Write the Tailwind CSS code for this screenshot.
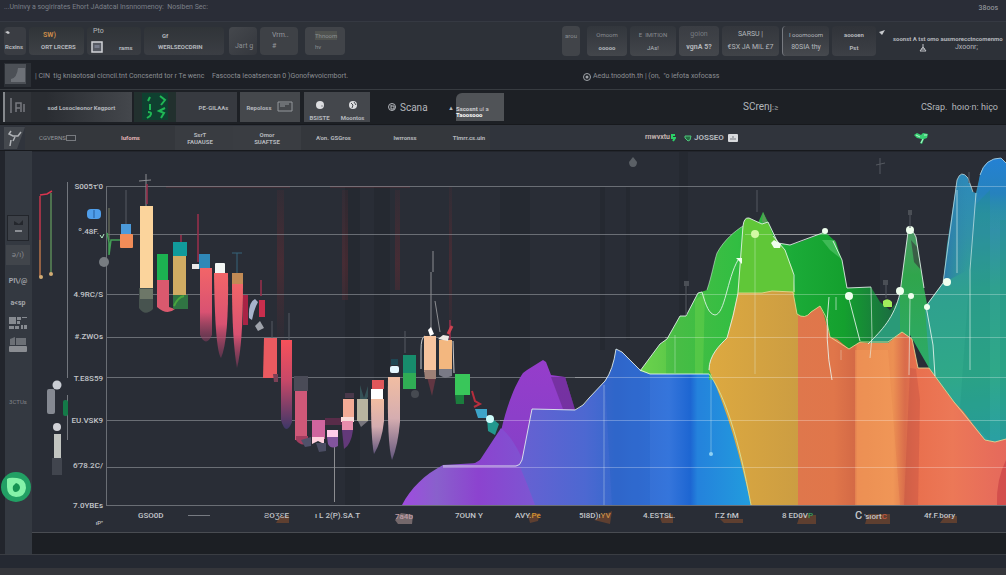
<!DOCTYPE html>
<html lang="en">
<head>
<meta charset="utf-8">
<title>Market chart</title>
<script src="https://cdn.jsdelivr.net/npm/@tailwindcss/browser@4"></script>
</head>
<body class="bg-[#252932] font-['Roboto',sans-serif] text-[#b4b7bc] overflow-x-hidden">
<div class="flex min-h-screen flex-col">

<header class="flex h-[21px] items-start justify-between bg-[#2a2d37] pl-1 pr-2 text-[7px] text-[#7c8089]">
  <p class="pt-px leading-3 whitespace-nowrap">...Uninvy a sogirirates Ehort JAdatcal Insnnomenoy: &nbsp;Nosiben Sec:</p>
  <p class="pt-0.5 leading-3 text-[#a0a3a9]">38oos</p>
</header>

<nav class="flex h-[39px] items-center justify-between border-t border-[#353942] bg-[#2d3138] pl-1 text-[7px] leading-[9px] whitespace-nowrap">
  <div class="flex h-7 items-stretch gap-[3px]">
    <button class="flex w-[22px] flex-col justify-between rounded-sm bg-[#3a3d43] px-px py-1 text-left text-[6px] font-bold"><svg class="h-1.5 w-1.5" viewBox="0 0 6 6"><path d="M0 1L3 0L5 2L3 3" fill="#c8cacd"/></svg><span>Rcxins</span></button>
    <button class="flex w-[55px] flex-col items-start justify-between rounded-sm bg-linear-to-b from-[#303438] to-[#3e4146] py-1 pl-3 text-[6px] font-bold"><span class="pl-0.5 text-[7px] text-[#c98a4a]">SW)</span><span>ORT LRCERS</span></button>
    <button class="flex w-[54px] flex-col items-start justify-between rounded-sm bg-linear-to-b from-[#303438] to-[#393c42] pb-0.5 pl-1"><span class="pl-0.5">Pto</span><span class="flex items-center gap-4 text-[6px] font-bold"><svg class="h-3 w-3" viewBox="0 0 12 12"><rect x="1" y="1" width="10" height="10" fill="#565a63" stroke="#d2d4d8" stroke-width="1.5"/><rect x="3.500" y="4" width="5" height="3" fill="#777c8b"/></svg>rams</span></button>
    <button class="flex w-[80px] flex-col items-start justify-between rounded-sm bg-linear-to-b from-[#303438] to-[#3b3e44] py-1 pl-3.5 text-[6px] font-bold"><span class="pl-1">Gf</span><span>WERLSEOCDRIN</span></button>
    <button class="ml-0.5 flex w-[28px] items-end rounded-sm bg-linear-to-br from-[#45484d] to-[#34373d] pb-1 pl-1.5 text-[#8c8f94]">Jart g</button>
    <button class="flex w-[38px] flex-col items-start justify-between rounded-sm bg-[#3e4146] py-1 pl-3 text-[#96999e]"><span>Vrm..</span><span>#</span></button>
    <button class="ml-1 flex w-[40px] flex-col items-start justify-between rounded-sm bg-[#414449] py-1 pl-2.5 text-[6px] text-[#8b8f91]"><span class="bg-[#505350]">Thnoom</span><span>hv</span></button>
  </div>
  <div class="flex h-[30px] items-stretch gap-[3px]">
    <button class="w-[18px] rounded-sm bg-[#414449] pb-3 text-[6px] text-[#8b8e93]">arou</button>
    <button class="ml-1 flex w-[40px] flex-col items-center justify-between rounded-sm bg-linear-to-b from-[#32363c] to-[#43464b] py-1 text-[6px]"><span class="text-[#888b91]">Omoom</span><span class="font-bold">ooooo</span></button>
    <button class="flex w-[46px] flex-col items-center justify-between rounded-sm bg-linear-to-b from-[#32363c] to-[#43464b] py-1 text-[6px]"><span class="text-[#888b91]">E &nbsp;IMITION</span><span>JAs!</span></button>
    <button class="flex w-[40px] flex-col items-center justify-between rounded-sm bg-linear-to-b from-[#3a3d43] to-[#44474c] py-1"><span class="text-[#777a80]">goion</span><span class="font-bold">vgnA 5?</span></button>
    <button class="flex w-[57px] flex-col items-center justify-between rounded-sm bg-linear-to-b from-[#34373d] to-[#404348] py-1"><span>SARSU |</span><span>€SX JA MIL £7</span></button>
    <button class="flex w-[47px] flex-col items-center justify-between rounded-sm border-l border-[#777a80] bg-linear-to-b from-[#33363c] to-[#46494e] py-1"><span class="text-[6px]">I ooomooom</span><span>80SIA thy</span></button>
    <button class="flex w-[44px] flex-col items-center justify-between rounded-sm bg-linear-to-b from-[#303339] to-[#3d4046] py-1 text-[6px] font-bold"><span>aoooen</span><span>Pst</span></button>
    <div class="flex w-[127px] flex-col justify-between py-1"><p class="flex gap-2 text-[6px] font-bold"><svg class="h-1.5 w-1.5 shrink-0" viewBox="0 0 6 6"><path d="M0 2L6 0L3 5Z" fill="#c8cacd"/></svg><span class="pt-1">soonst A tst omo ausmorecctncomenmo</span></p><p class="flex items-center gap-7 pl-10"><svg class="h-2 w-2" viewBox="0 0 8 8"><path d="M4 0V3L1 7H7L4 3M2 5H6" fill="none" stroke="#c2c4c8"/></svg>Jxoonr;</p></div>
  </div>
</nav>

<section class="flex h-[30px] items-center border-b border-[#373b40] bg-[#1d2026] pl-1 text-[7px] text-[#8b8e93] whitespace-nowrap">
  <svg class="h-6 w-[27px]" viewBox="0 0 27 24"><rect width="27" height="24" fill="#2b2f35"/><rect x="1" y="1" width="21" height="20" fill="#4c5056"/><path d="M14 5H21V19H7V16Q13 15 14 5Z" fill="#6d7177"/></svg>
  <p class="w-[181px] pl-1 pt-1">| CIN &nbsp;tig kniaotosal cicncil.tnt Concsentd tor r Te wenc</p>
  <p class="w-[371px] pt-1">Fascocta Ieoatsencan 0 )Gonofwvoicmbort.</p>
  <p class="flex items-center gap-0.5 pt-1"><svg class="h-2 w-2" viewBox="0 0 8 8"><circle cx="4" cy="4" r="3.500" fill="none" stroke="#a0a3a8"/><circle cx="4" cy="4" r="1.500" fill="#a0a3a8"/></svg>Aedu.tnodoth.th | (on, &nbsp;"o iefota xofocass</p>
</section>

<section class="flex h-[34px] items-center bg-[#1d2025] pl-[3px] text-[6px] leading-[9px] whitespace-nowrap">
  <div class="flex h-[30px] w-[28px] items-center justify-center border-l-2 border-[#85888c] bg-[#303338]"><svg class="h-5 w-5" viewBox="0 0 20 20"><path d="M3 1V16M8 15V6H13V15M8 11H12M16 7V15" fill="none" stroke="#777a7f" stroke-width="1.500"/></svg></div>
  <button class="h-[30px] w-[101px] bg-linear-to-r from-[#2a2d32] from-15% to-[#44474c] font-bold">sod Losocieonor Kegport</button>
  <button aria-label="Signals" class="ml-0.5 flex h-[30px] w-[42px] items-center justify-center bg-[#22302e]"><svg class="h-7 w-8" viewBox="0 0 32 28"><rect x="3" width="26" height="27" fill="#0f4030"/><path d="M11 4L9 8M11 11V17M9 19Q14 19 11 23L8 25M21 3L26 7L22 12M26 15L20 18L25 20L22 25" fill="none" stroke="#20b855" stroke-width="2"/></svg></button>
  <button class="h-[30px] w-[61px] bg-[#373a40] pl-3.5 font-bold">PE-GILAAs</button>
  <button class="ml-[3px] flex h-[30px] w-[60px] items-center justify-center gap-1.5 bg-[#45484c] font-bold">Repoloss<svg class="h-3 w-4" viewBox="0 0 16 12"><path d="M1 1H15V10H1ZM3 3H12M3 5H8" fill="none" stroke="#94979b"/></svg></button>
  <div class="ml-1 flex h-[30px] w-[66px] items-end justify-around bg-[#44474c] font-bold">
    <button class="flex flex-col items-center gap-1"><svg class="h-2 w-2" viewBox="0 0 8 8"><circle cx="4" cy="4" r="4" fill="#dcdde0"/><path d="M5 5H7" stroke="#8a8d91"/></svg>BSISTE</button>
    <button class="flex flex-col items-center gap-1"><svg class="h-2 w-2" viewBox="0 0 8 8"><circle cx="4" cy="4" r="4" fill="#dcdde0"/><path d="M2 2L4 4L3 7M5 1L7 4" stroke="#4a4d52" fill="none"/></svg>Moontos</button>
  </div>
  <button class="ml-[18px] flex w-[60px] items-center gap-1 text-[10px]"><svg class="h-2 w-2" viewBox="0 0 8 8"><circle cx="4" cy="4" r="3.500" fill="none" stroke="#b4b7bc"/><path d="M3 2V6H6V3H3" fill="none" stroke="#b4b7bc"/></svg>Scana</button>
  <span>&#9650;</span>
  <button class="ml-0.5 h-7 w-[48px] rounded-tl-md bg-[#505357] pt-2 text-left font-bold"><span class="block leading-[7px] text-[#d0d2d5]">Sscosnt <span class="font-normal">ul a</span></span><span class="block leading-[6px] text-white">Taoosooo</span></button>
  <a href="#" class="ml-[239px] text-[10px]">SCrenȷ<span class="text-[8px]">:≥</span></a>
  <a href="#" class="ml-auto pr-2 text-[9px]">CSrap. &nbsp;hoıo·n: hiço</a>
</section>

<section class="flex h-[27px] items-center border-y border-[#17191d] bg-[#30343c] pl-1 text-[6px] leading-[7px] font-bold whitespace-nowrap">
  <svg class="h-[22px] w-[21px]" viewBox="0 0 21 22"><path d="M0 0H21L13 22H0Z" fill="#44484e"/><path d="M7 4L5 7L9 9H14L17 5M7 13L6 19M11 10L9 14" fill="none" stroke="#b0b3b7" stroke-width="1.500"/></svg>
  <div class="flex h-6 items-center bg-[#34373c]">
  <button class="flex w-[80px] items-center pl-3.5 font-normal text-[#95989c]">CGVERNS<span class="h-1.5 w-2.5 border border-[#777a7f]"></span></button>
  <button class="w-[70px] pl-4 text-left text-[#e0b3b5]">Iufoms</button>
  <button class="h-full w-[58px] bg-[#393c41] pr-2">SsrT<br>FAUAUSE</button>
  <button class="h-full w-[68px] bg-[#3a3d42]">Omor<br>SUAFTSE</button>
  <button class="w-[61px] pl-1">A'on. GSGros</button>
  <button class="w-[86px]">lwrronss</button>
  <button class="w-[42px]">Tlmrr.cs.uin</button>
  </div>
  <p class="ml-[155px] flex items-center text-[7px] text-[#c4b3b0]">rnwvxtu<svg class="h-2 w-1.5" viewBox="0 0 6 8"><path d="M5 1H2V4H5L3 7" fill="none" stroke="#2bd067" stroke-width="2"/></svg></p>
  <p class="ml-2 flex items-center gap-0.5 text-[8px]"><svg class="h-2 w-2" viewBox="0 0 8 8"><path d="M1 2H7L6 6L4 7L1 4Z" fill="#256d43" stroke="#4fc47b"/></svg>JOSSEO</p>
  <svg class="ml-1 h-2 w-2.5" viewBox="0 0 10 8"><rect width="10" height="8" rx="1" fill="#d8dadd"/><path d="M2 5H8M4 3H6" stroke="#777a80"/></svg>
  <svg class="mr-[77px] ml-auto h-3.5 w-4" viewBox="0 0 16 14"><path d="M1 4L4 2L8 4L10 2L15 3L14 7L11 8L9 13L7 12L9 8L4 7Z" fill="#37cf72"/><path d="M3 4L7 6M11 4L14 4M10 8L8 12" stroke="#b8f4d0" stroke-width="1"/></svg>
</section>

<main class="flex flex-1 bg-[#252932]">
  <aside class="flex w-8 shrink-0 flex-col items-center border-b border-[#3a3d43] bg-linear-to-r from-[#22252c] from-15% to-[#343941] to-16% pl-1 text-[7px] text-[#a4a7ac]">
    <button aria-label="Panel" class="mt-16 flex h-[26px] w-[22px] items-center justify-center border border-[#22252b] bg-[#3c4047]"><svg class="h-4 w-4" viewBox="0 0 16 16"><path d="M4 1L9 4L13 0V5H4Z" fill="#24272d"/><path d="M5 11H12" stroke="#a6a9ae" stroke-width="1.500"/></svg></button>
    <button class="mt-1 h-5 w-6 bg-[#41454b] text-[8px] text-[#85888d]">ə/ı)</button>
    <button class="mt-2 h-4 font-bold">PI\/@</button>
    <button class="mt-1.5 h-4 font-bold">a&lt;sp</button>
    <button aria-label="Grid" class="mt-1.5"><svg class="h-3 w-[18px]" viewBox="0 0 18 12"><path d="M0 0H7V7H0ZM8 0H12V3H8ZM13 0H18V1H13ZM8 4H11V7H8ZM0 9H5V12H0ZM6 9H10V12H6ZM12 8H14V12H12ZM15 8H18V12H15Z" fill="#878b91"/></svg></button>
    <button aria-label="Files" class="mt-2"><svg class="h-4 w-[18px]" viewBox="0 0 18 16"><path d="M1 2L6 0V8H1ZM7 1H17V8H7Z" fill="#6c7076"/><rect y="9" width="18" height="6" rx="1" fill="#8a8d92"/></svg></button>
    <button class="mt-11 text-[6px] text-[#81848a]">3CTUs</button>
    <button aria-label="Start" class="mt-auto mb-[52px] -ml-1"><svg class="h-[30px] w-[30px]" viewBox="0 0 30 30"><circle cx="15" cy="15" r="15" fill="#22a064"/><path d="M6 7Q8 5 16 6Q25 7 25 16Q24 25 15 25Q6 24 6 15Z" fill="#84f2a8"/><path d="M15 11Q19 12 19 16Q18 20 14 20Q11 19 12 14Z" fill="#159352"/></svg></button>
  </aside>
  <div class="flex min-w-0 flex-1 flex-col border-t border-[#22252c] border-b border-b-[#3a3d43] bg-[#1c1f24]">
  <svg class="block h-auto w-full border-b border-[#494c52]" viewBox="32 152 974 380" font-family="Roboto,sans-serif" font-size="8" fill="#c3c6ca" role="img" aria-label="Candlestick and area chart">
    <defs>
      <linearGradient id="purple" x1="0" x2="0" y1="0" y2="1"><stop offset="0" stop-color="#963dcb"/><stop offset=".6" stop-color="#8740c8"/><stop offset="1" stop-color="#904bd6"/></linearGradient>
      <linearGradient id="violet" gradientUnits="userSpaceOnUse" x1="402" x2="540" y1="0" y2="0"><stop offset="0" stop-color="#a04be0"/><stop offset=".25" stop-color="#8960cc"/><stop offset=".55" stop-color="#8c43cf"/><stop offset="1" stop-color="#7b58d2"/></linearGradient>
      <linearGradient id="blue" gradientUnits="userSpaceOnUse" x1="515" x2="752" y1="0" y2="0"><stop offset="0" stop-color="#6960d2"/><stop offset=".3" stop-color="#4c68d1"/><stop offset=".42" stop-color="#3769cd"/><stop offset=".65" stop-color="#3575db"/><stop offset=".74" stop-color="#1d66d2"/><stop offset=".77" stop-color="#2482dc"/><stop offset="1" stop-color="#229ddd"/></linearGradient>
      <linearGradient id="green" gradientUnits="userSpaceOnUse" x1="640" x2="895" y1="0" y2="0"><stop offset="0" stop-color="#62cf4c"/><stop offset=".14" stop-color="#48bd45"/><stop offset=".38" stop-color="#32be42"/><stop offset=".6" stop-color="#1bab38"/><stop offset=".8" stop-color="#14a02e"/><stop offset="1" stop-color="#1b6b42"/></linearGradient>
      <linearGradient id="teal" gradientUnits="userSpaceOnUse" x1="940" x2="975" y1="170" y2="441"><stop offset="0" stop-color="#2c88bd"/><stop offset=".25" stop-color="#3191a8"/><stop offset=".45" stop-color="#2fa08f"/><stop offset=".75" stop-color="#2fa888"/><stop offset="1" stop-color="#2aa0a2"/></linearGradient>
      <linearGradient id="crest" x1="0" x2="0" y1="0" y2="1"><stop offset="0" stop-color="#2481d4"/><stop offset=".5" stop-color="#2682bd"/><stop offset="1" stop-color="#2a9c8f" stop-opacity="0"/></linearGradient>
      <linearGradient id="edge" x1="0" x2="1" y1="0" y2="0"><stop offset="0" stop-color="#2c6fb0" stop-opacity=".8"/><stop offset="1" stop-color="#2c86a8" stop-opacity="0"/></linearGradient>
      <linearGradient id="spike" x1="0" x2="0" y1="0" y2="1"><stop offset="0" stop-color="#4c9a66"/><stop offset=".3" stop-color="#30a54c"/><stop offset="1" stop-color="#2cab6d"/></linearGradient>
      <linearGradient id="orange" gradientUnits="userSpaceOnUse" x1="709" x2="1006" y1="0" y2="0"><stop offset="0" stop-color="#dda940"/><stop offset=".3" stop-color="#cc9d42"/><stop offset=".3" stop-color="#df774c"/><stop offset=".42" stop-color="#e0764a"/><stop offset=".49" stop-color="#d46a46"/><stop offset=".5" stop-color="#e8864f"/><stop offset=".62" stop-color="#ec9053"/><stop offset=".66" stop-color="#d96c4b"/><stop offset=".7" stop-color="#e9704e"/><stop offset=".82" stop-color="#ec7857"/><stop offset="1" stop-color="#e5695c"/></linearGradient>
      <linearGradient id="heat" x1="0" x2="0" y1="0" y2="1"><stop offset="0" stop-color="#ee704f" stop-opacity="0"/><stop offset="1" stop-color="#ea5058" stop-opacity=".5"/></linearGradient>
      <linearGradient id="tail" x1="0" x2="0" y1="0" y2="1"><stop offset="0" stop-color="#f26568"/><stop offset=".6" stop-color="#d95272"/><stop offset="1" stop-color="#8d3d62" stop-opacity=".5"/></linearGradient>
      <linearGradient id="fade" x1="0" x2="0" y1="0" y2="1"><stop offset="0" stop-color="#f7515a"/><stop offset=".45" stop-color="#c84868"/><stop offset="1" stop-color="#3e3768"/></linearGradient>
      <linearGradient id="peach" x1="0" x2="0" y1="0" y2="1"><stop offset="0" stop-color="#f1bda2"/><stop offset=".5" stop-color="#d5adb0"/><stop offset="1" stop-color="#62567d"/></linearGradient>
      <linearGradient id="rust" x1="0" x2="0" y1="0" y2="1"><stop offset="0" stop-color="#7b2b32" stop-opacity=".1"/><stop offset=".5" stop-color="#7b2b32" stop-opacity=".35"/><stop offset="1" stop-color="#7b2b32" stop-opacity=".05"/></linearGradient>
    </defs>
    <rect x="32" y="152" width="974" height="382" fill="#292d36"/>
    <g fill="#23262e" opacity=".6"><path d="M345 187H360V505H345ZM374 187H390V400H374ZM500 187H530V400H500ZM600 187H605V350H600ZM626 187H630V340H626ZM679 152H688V320H679ZM850 187H880V300H850Z"/></g>
    <g fill="url(#rust)"><path d="M277 190H284V340H277ZM342 190H348V300H342ZM449 187H452V330H449ZM395 190H400V290H395Z"/></g>
    <path d="M166 187H290M330 187H410" stroke="#702e36" opacity=".6"/>
    <path d="M107 186.500H1006M107 234.500H1006M107 294.500H1006M107 337.500H1006M107 377.500H1006M107 420.500H1006M107 467.500H1006M107 505.500H1006M106.500 186V506" stroke="#a0a4aa" stroke-opacity=".55"/>

    <!-- Left gauges -->
    <path d="M67.500 182V378M67.500 395V440" stroke="#73777e"/>
    <path d="M40 195L47 194L52 191" fill="none" stroke="#db354f" stroke-width="1.500"/><path d="M40 196V240" stroke="#c3374d" stroke-width="1.500"/><path d="M40 240V277" stroke="#b9734a" stroke-width="1.500"/><path d="M51 193V274" stroke="#5b8a58" stroke-width="1.500"/>
    <circle cx="41" cy="277" r="2" fill="#d3ac74"/><circle cx="51" cy="274" r="2" fill="#d3ac74"/>
    <rect x="87" y="209" width="14" height="10" rx="4" fill="#4f9eea"/><path d="M94 210V218" stroke="#245c9d"/>
    <circle cx="104" cy="262" r="5" fill="#777c81"/>
    <path d="M109 208V240" stroke="#7b8065"/><path d="M107 233L109 242V255L111 240H121" fill="none" stroke="#439f55" stroke-width="1.500"/><path d="M100 235L102 238L104 234" fill="none" stroke="#b8f0c6"/>
    <circle cx="57" cy="385" r="4.500" fill="#c9ccd3"/><rect x="47" y="389" width="8" height="25" rx="2" fill="#858992"/><rect x="63" y="400" width="5" height="16" rx="2" fill="#147a48"/>
    <circle cx="57" cy="427" r="4" fill="#d0d2d7"/><rect x="54" y="434" width="7" height="24" fill="#c2c5c1"/><rect x="52" y="458" width="10" height="17" fill="#41454e"/>

    <!-- Wicks -->
    <g fill="none" stroke="#8c8d91"><path d="M146 174V206M139 181L151 180M334.500 440V502M431 272V330M433 251V272M435 301L440 332"/><path d="M126 190V224M289 313V340M405 331V353M272 321V340" stroke="#565a62"/><path d="M198 214V262M181 235V242M261 280V296M450 320V340M147 184V204" stroke="#9c2f4c" stroke-width="1.500"/><path d="M232 253H242M237 253V274" stroke="#37647b"/><path d="M421 369V350Q421 337 425 336M453 341L454 373" stroke="#c9c9cb"/></g>

    <!-- Candles -->
    <rect x="121" y="224" width="10" height="10" fill="#4c9ada"/><rect x="120" y="234" width="13" height="14" rx="1" fill="#f18c58"/>
    <rect x="140" y="206" width="13" height="83" fill="#fbd49c"/><path d="M139 288H153V309Q145 317 139 308Z" fill="#47534f"/><rect x="140" y="289" width="13" height="10" fill="#6d7768"/>
    <rect x="157" y="254" width="11" height="26" fill="#1cb251"/><path d="M157 280H169V307L175 309Q167 316 157 307Z" fill="#da596e"/>
    <rect x="173" y="242" width="14" height="14" fill="#119b9b"/><rect x="173" y="256" width="13" height="39" fill="#d1ac63"/><path d="M173 295H188V309H173Z" fill="#307443"/><path d="M174 306Q178 297 184 296" stroke="#49a53d" fill="none" stroke-width="2"/>
    <rect x="199" y="254" width="11" height="15" fill="#2f88b8"/><rect x="192" y="264" width="7" height="5" fill="#eceaea"/><path d="M200 268H212V335Q206 348 200 335Z" fill="url(#tail)"/>
    <rect x="215" y="263" width="10" height="11" rx="1" fill="#f3f6f4"/><path d="M214 273H228Q229 340 221 358Q215 350 214 273Z" fill="url(#tail)"/>
    <rect x="232" y="273" width="11" height="12" fill="#c28b55"/><path d="M232 284H243Q243 345 237 368Q232 340 232 284Z" fill="url(#tail)"/>
    <rect x="243" y="295" width="5" height="30" fill="#a92345"/><path d="M249 318Q248 302 255 299L258 302Q254 309 252 320Z" fill="#a8b3cb"/><rect x="259" y="300" width="6" height="17" fill="#c92e4d"/><path d="M255 326L260 321L264 328L258 331Z" fill="#9fa3ab"/>
    <path d="M264 338H277V378H263Z" fill="#ea5a60"/><path d="M273 374H278V382H274Z" fill="#7c4056"/>
    <path d="M281 340H292V422Q286 437 281 420Z" fill="url(#fade)"/>
    <rect x="294" y="376" width="14" height="15" fill="#4a4b57"/><rect x="295" y="391" width="12" height="49" fill="#cf5878"/><path d="M296 436H308V443Q301 447 296 440Z" fill="#a23d5f"/><path d="M301 440L311 437V446L305 447Z" fill="#50516a"/>
    <rect x="312" y="420" width="13" height="19" fill="#cf659e"/><path d="M312 437H324V444L318 441L312 444Z" fill="#ffd2df"/><path d="M316 443H326V451L319 452Z" fill="#4b4d63"/>
    <rect x="325" y="418" width="17" height="7" fill="#592c49"/><rect x="327" y="430" width="11" height="7" fill="#ffcce9"/><path d="M327 437H338V446Q331 450 328 444Z" fill="#82549d"/>
    <rect x="345" y="393" width="9" height="5" fill="#49384a"/><rect x="343" y="399" width="11" height="18" fill="#f3ab96"/><rect x="341" y="417" width="13" height="5" fill="#fadbd9"/><rect x="342" y="421" width="11" height="9" fill="#e88dac"/><path d="M342 430H353Q351 445 344 449Z" fill="#63397a"/>
    <path d="M360 385L364 398L368 386V397L366 400H360Z" fill="#365257"/><rect x="357" y="399" width="11" height="22" fill="#b8b49f"/><path d="M358 421H368L361 427Z" fill="#77757d"/>
    <rect x="372" y="380" width="12" height="9" fill="#df575a"/><rect x="371" y="389" width="12" height="10" fill="#fff"/><path d="M371 399H384V421Q382 441 374 454Q371 440 371 399Z" fill="url(#peach)"/>
    <rect x="391" y="359" width="7" height="6" fill="#1f4653"/><rect x="390" y="366" width="9" height="7" rx="2" fill="#e5f7ff"/><path d="M388 377H400V422Q398 445 392 460Q387 445 388 377Z" fill="url(#peach)"/>
    <rect x="403" y="355" width="13" height="18" fill="#178c6c"/><rect x="403" y="373" width="13" height="16" fill="#30ad55"/><circle cx="415" cy="394" r="4" fill="#464a51"/>
    <path d="M427 377H436L432 396Z" fill="#613642"/><rect x="424" y="336" width="12" height="36" fill="#f7c49e"/><path d="M424 370H436V379H425Z" fill="#9d8076"/><path d="M428 330L431 327L434 334L430 336Z" fill="#fff"/>
    <rect x="439" y="340" width="13" height="29" fill="#f3b77f"/><path d="M439 369H452V376L445 378L439 375Z" fill="#797a86"/><path d="M438 339L443 335L449 336L448 341L443 340Z" fill="#eee9e4"/><path d="M448 334L452 326" stroke="#cc4350" stroke-width="3"/>
    <path d="M455 374H470V395H455Z" fill="#39c65a"/><path d="M455 395H464V404H456Z" fill="#1b7d3d"/><path d="M472 391L475 401L480 404L474 407" fill="none" stroke="#b72e3d" stroke-width="2"/><path d="M475 409H487V418H478Z" fill="#3da4c8"/><path d="M487 418L494 420L499 424L495 435L488 431Z" fill="#22988e"/><circle cx="490" cy="419" r="4" fill="#cdfcfb"/>

    <!-- Area layers -->
    <path d="M470 466L485 457L501 431C507 405 515 385 523 373L527 370L543 360L546 362L551 375L565 377L575 410L530 466L528 505H460Z" fill="url(#purple)"/>
    <path d="M551 377H565L575 409H563Z" fill="#642a87" opacity=".6"/>
    <path d="M402 505C411 488 424 475 443 465L478 463L501 428C513 438 521 455 527 470L540 505Z" fill="url(#violet)"/>
    <path d="M516 466Q520 466 522 460L532 409L575 410Q584 406 589 398L605 381Q613 370 616 349L622 352L640 370L650 374H709C725 395 739 440 751 505H535Q527 483 520 467Z" fill="url(#blue)"/>
    <path d="M605 382Q614 370 616 350L640 370L650 374V505H612Z" fill="#1959bf" opacity=".22"/>
    <path d="M640 371L660 344L667 339L680 316H686L698 293L707 290C712 275 714 262 717 253C724 240 735 231 743 226L747 218L758 223L763 212L768 222L778 243L790 245L800 242L825 232L836 242L842 260L847 288L871 287L880 302L890 310L898 301L900 350L709 380V374H650Z" fill="url(#green)"/>
    <path d="M743 226Q744 217 749 218L762 224L768 222L773 236L785 250L793 270L795 295H737Z" fill="#60c738"/>
    <path d="M762 222L763 212L768 224Z" fill="#5a9a58"/>
    <path d="M640 371L666 339V374H650ZM695 300L705 293L703 374H695Z" fill="#84df4e" opacity=".3"/>
    <path d="M822 240L830 250L840 258L835 240Z" fill="#66cf7a" opacity=".5"/>
    <path d="M868 344C882 330 894 318 900 293V345Z" fill="#2a9a78"/>
    <path d="M900 293L908 232Q912 228 916 237L924 288L931 325L936 380L910 335L900 345Z" fill="url(#spike)"/>
    <path d="M911 240L917 247L921 270L914 262Z" fill="#38433f" opacity=".7"/>
    <path d="M925 307L943 283L947 245L957 180Q961 169 968 178L973 192L976 193L980 175Q985 158 1001 158L1006 163V445H985L930 375Z" fill="url(#teal)"/>
    <path d="M943 283L957 180L968 180V270Z" fill="url(#edge)"/>
    <path d="M976 204L980 175Q985 158 1001 158L1006 163V230H974Z" fill="url(#crest)"/>
    <path d="M970 270L976 204L990 190V441L960 410ZM1000 220H1006V441H1000Z" fill="#1d907c" opacity=".25"/>
    <path d="M751 505C740 455 728 412 709 370C709 355 720 345 727 338L738 293L762 293L772 291L793 292L797 314Q805 320 811 312L820 306L824 315L830 337L837 339L849 349L860 342L868 343H888L902 332L912 339L918 368H929Q941 385 954 402L963 411L985 440L995 442L1006 439V505Z" fill="url(#orange)"/>
    <path d="M798 390H1006V505H798Z" fill="url(#heat)" opacity=".5" clip-path="path('M798 390H935L954 402L963 411L985 440L995 442L1006 439V505H798Z')"/><path d="M855 350H888L900 505H855Z" fill="#f7a760" opacity=".3"/><path d="M910 368L916 369L920 400L918 505H904Z" fill="#be4a43" opacity=".35"/><path d="M1006 460Q996 480 997 505H1006Z" fill="#c73c42" opacity=".6"/>

    <!-- Grid seen through the areas -->
    <path d="M443 467.500H1006M500 420.500H1006M575 377.500H1006M665 337.500H1006M700 294.500H1006M745 234.500H840M955 186.500H1006" stroke="#fff" stroke-opacity=".28"/>
    <g fill="none" stroke="#e7f5ef" stroke-opacity=".85"><path d="M443 466L516 466Q520 466 522 460L532 409L575 410Q584 406 589 398L605 381Q613 370 616 349L622 352L640 370L650 374H709"/><path d="M709 374C725 395 739 440 751 505" stroke="#d7e5a2"/><path d="M640 371L660 344L667 339L680 316H686L698 293L702 292C706 306 709 314 715 315C725 314 727 279 738 260M743 226Q744 217 749 218L762 224L768 222L778 243L790 245L825 232M743 226L738 293Q734 315 727 338C720 345 709 355 709 370"/><path d="M707 290C712 275 714 262 717 253C724 240 735 231 743 226" stroke-opacity=".5"/><path d="M738 293H762L772 291L793 292L797 314Q805 320 811 312L820 306L826 317L830 337L849 349L860 342H888L902 332L912 339L918 368H929L954 402L985 440L995 442L1006 439" stroke="#e5d892"/><path d="M773 236L785 250L794 275V292M833 241L842 260L847 288L871 287M848 295L860 341M829 297Q824 340 832 380M868 344C882 330 894 318 900 293L908 232Q912 228 916 237L924 288M926 306L933 345L935 376M926 306L943 283"/><path d="M943 283L957 180Q961 169 968 178L973 192M980 175Q985 158 1001 158L1006 163M957 190V273M976 193L970 270V370M836 297V310M871 287L872 337L870 358M910 297L909 375" stroke-opacity=".6"/><path d="M755 230V374M711 374V453M675 335V373M604 385V505M841 350V360" stroke-opacity=".35"/></g>
    <g fill="#efffee"><circle cx="755" cy="234" r="4" fill="#d3f9a4"/><path d="M771 243L774 240L781 244L780 248L774 248Z"/><circle cx="825" cy="231" r="3"/><circle cx="849" cy="296" r="4"/><circle cx="900" cy="291" r="4"/><circle cx="911" cy="296" r="3"/><circle cx="910" cy="230" r="4"/><circle cx="927" cy="307" r="3"/><circle cx="947" cy="282" r="4"/><path d="M736 258H742V264L739 261Z"/><circle cx="711" cy="454" r="2" fill="#8fd1f3"/></g>
    <path d="M883 305V301Q888 297 892 302V307H884Z" fill="#a2ee5c"/><path d="M633 157L637 162Q637 167 633 167Q629 167 629 162Z" fill="#5b6066"/>
    <path d="M910 210V228M686 282V315M757 190V212M886 282V298M880 158V174M876 165L885 163M969 172V183" stroke="#555960" fill="none"/><path d="M684 281H689V286H684ZM908 210H912V215H908ZM883 280H888V285H883Z" fill="#4b4f56"/>

    <!-- Axis labels -->
    <g text-anchor="end" font-weight="500"><text x="103" y="189">S005τ'0</text><text x="99" y="234">º.48F.</text><text x="103" y="297">4.9RC/S</text><text x="103" y="339">#.ZWOs</text><text x="103" y="381">T.E8S59</text><text x="103" y="423">EU.VSK9</text><text x="103" y="468">6'78.2C/</text><text x="103" y="508">7.0YBEs</text><text x="103" y="525" font-size="6">ıP"</text></g>
    <g fill="#af5b28" opacity=".4"><path d="M280 516H289V523H276ZM528 515L540 513L538 521L530 523ZM594 520L612 511L610 524ZM660 518L673 514V523H662ZM720 519H743V523H724ZM800 515H816V524H797ZM868 514H890V524H865ZM945 516H957V523H940Z"/></g>
    <path d="M395 520L401 513L413 515L412 524H398Z" fill="#74686b"/>
    <path d="M188 515.500H210" stroke="#777b82"/>
    <g font-weight="500"><text x="138" y="518">GSO0D</text><text x="264" y="518">ƧOƷƐE</text><text x="315" y="518">ı L 2(P).SA.T</text><text x="395" y="519" fill="#bd9ca5">7a4b</text><text x="455" y="518">7OUN Y</text><text x="515" y="518">AVY.<tspan fill="#d99731">Pe</tspan></text><text x="579" y="518">5I8D)ı<tspan fill="#c98d46">YV</tspan></text><text x="643" y="518">4.ESTSL.</text><text x="715" y="518">Γ.Z fıM</text><text x="782" y="518">8 ED0V<tspan fill="#38a15b">P</tspan></text><text x="855" y="519"><tspan font-size="11">C</tspan> 'sıort<tspan fill="#c55a43">C</tspan></text><text x="924" y="518">4f.F.bory</text></g>
  </svg>
  <div class="h-5"></div>
  </div>
</main>
<footer class="flex h-5 flex-col justify-end bg-[#252932]"><div class="h-[7px] bg-[#35363b]"></div></footer>
</div>
</body>
</html>
